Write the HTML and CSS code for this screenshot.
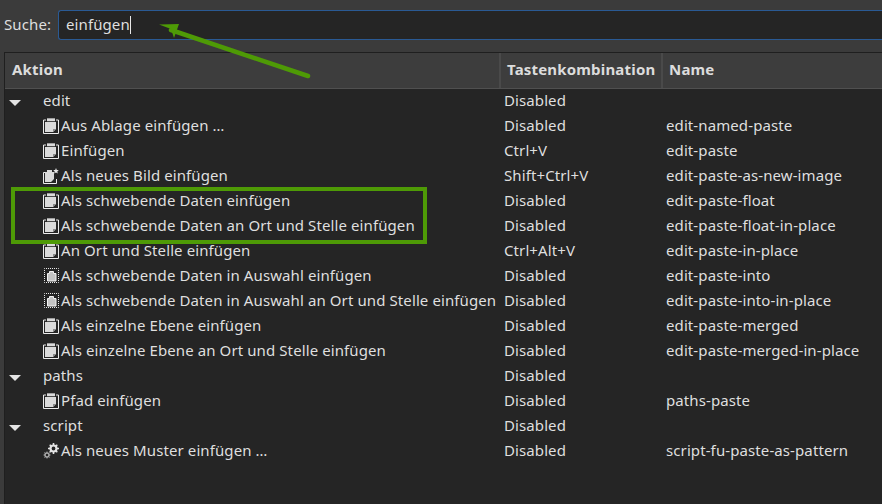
FILE: index.html
```html
<!DOCTYPE html>
<html lang="de">
<head>
<meta charset="utf-8">
<title>Tastenkombinationen</title>
<link rel="stylesheet" href="styles.css">
</head>
<body>
<svg class="defs" width="0" height="0" aria-hidden="true">
  <defs>
    <symbol id="paste" viewBox="0 0 16 16">
      <path d="M3 2H.5v13.500h15V2H13" fill="none" stroke="#ececec"/>
      <path d="M4 0h8v4h1v7l-3 3H2V4h2z" fill="#dadada"/>
      <path d="M4 0h8v1H4z" fill="#a0a0a0"/>
      <path d="M4 3h8v1H4z" fill="#4a4a4a"/>
      <path d="M10 14v-3h3z" fill="#8a8a8a"/>
    </symbol>
    <symbol id="paste-new" viewBox="0 0 16 16">
      <path d="M2.500 4.500H.5v11h13V11" fill="none" stroke="#ececec"/>
      <path d="M4 2h5v2h2v7l-3 3H2V4h2z" fill="#dadada"/>
      <path d="M13 0l.8 1.900 2 .2-1.500 1.300.5 2-1.800-1-1.800 1 .5-2-1.500-1.300 2-.2z" fill="#e8e8e8"/>
    </symbol>
    <symbol id="paste-into" viewBox="0 0 16 16">
      <rect x="1.500" y="0.500" width="14" height="14" fill="none" stroke="#e8e8e8" stroke-dasharray="1 1" stroke-dashoffset="0.500"/>
      <path d="M6.500 3.500h4v2h2.500v7.500H4.500V5.500h2z" fill="#c4c4c4" stroke="#f2f2f2"/>
    </symbol>
    <symbol id="gears" viewBox="0 0 16 16">
      <circle cx="10.500" cy="5.500" r="3" fill="none" stroke="#e4e4e4" stroke-width="2.200"/>
      <path d="M10.500 0v2M10.500 9v2M5 5.500h2M14 5.500h2M6.700 1.700l1.300 1.300M13 8l1.300 1.300M14.300 1.700L13 3M8 8L6.700 9.300" stroke="#e4e4e4" stroke-width="1.600"/>
      <circle cx="4" cy="12" r="2" fill="none" stroke="#a8a8a8" stroke-width="1.500"/>
      <path d="M4 8.500v1.500M4 14v1.500M.500 12H2M6 12h1.500M1.500 9.500l1 1M5.500 13.500l1 1M6.500 9.500l-1 1M2.500 13.500l-1 1" stroke="#a8a8a8"/>
    </symbol>
  </defs>
</svg>

<header class="search">
  <label class="search-label" for="q">Suche:</label>
  <div class="search-field" id="q"><span class="search-text">einfügen</span><span class="caret"></span></div>
</header>

<main class="table">
  <div class="thead">
    <div class="th th-action">Aktion</div>
    <div class="th th-key">Tastenkombination</div>
    <div class="th th-name">Name</div>
  </div>

  <div class="row"><div class="cell-action group"><span class="twisty"></span><span>edit</span></div><div>Disabled</div><div></div></div>
  <div class="row"><div class="cell-action"><svg class="ico"><use href="#paste"/></svg><span>Aus Ablage einfügen …</span></div><div>Disabled</div><div>edit-named-paste</div></div>
  <div class="row"><div class="cell-action"><svg class="ico"><use href="#paste"/></svg><span>Einfügen</span></div><div>Ctrl+V</div><div>edit-paste</div></div>
  <div class="row"><div class="cell-action"><svg class="ico"><use href="#paste-new"/></svg><span>Als neues Bild einfügen</span></div><div>Shift+Ctrl+V</div><div>edit-paste-as-new-image</div></div>
  <div class="row"><div class="cell-action"><svg class="ico"><use href="#paste"/></svg><span>Als schwebende Daten einfügen</span></div><div>Disabled</div><div>edit-paste-float</div></div>
  <div class="row"><div class="cell-action"><svg class="ico"><use href="#paste"/></svg><span>Als schwebende Daten an Ort und Stelle einfügen</span></div><div>Disabled</div><div>edit-paste-float-in-place</div></div>
  <div class="row"><div class="cell-action"><svg class="ico"><use href="#paste"/></svg><span>An Ort und Stelle einfügen</span></div><div>Ctrl+Alt+V</div><div>edit-paste-in-place</div></div>
  <div class="row"><div class="cell-action"><svg class="ico"><use href="#paste-into"/></svg><span>Als schwebende Daten in Auswahl einfügen</span></div><div>Disabled</div><div>edit-paste-into</div></div>
  <div class="row"><div class="cell-action"><svg class="ico"><use href="#paste-into"/></svg><span>Als schwebende Daten in Auswahl an Ort und Stelle einfügen</span></div><div>Disabled</div><div>edit-paste-into-in-place</div></div>
  <div class="row"><div class="cell-action"><svg class="ico"><use href="#paste"/></svg><span>Als einzelne Ebene einfügen</span></div><div>Disabled</div><div>edit-paste-merged</div></div>
  <div class="row"><div class="cell-action"><svg class="ico"><use href="#paste"/></svg><span>Als einzelne Ebene an Ort und Stelle einfügen</span></div><div>Disabled</div><div>edit-paste-merged-in-place</div></div>
  <div class="row"><div class="cell-action group"><span class="twisty"></span><span>paths</span></div><div>Disabled</div><div></div></div>
  <div class="row"><div class="cell-action"><svg class="ico"><use href="#paste"/></svg><span>Pfad einfügen</span></div><div>Disabled</div><div>paths-paste</div></div>
  <div class="row"><div class="cell-action group"><span class="twisty"></span><span>script</span></div><div>Disabled</div><div></div></div>
  <div class="row"><div class="cell-action"><svg class="ico"><use href="#gears"/></svg><span>Als neues Muster einfügen …</span></div><div>Disabled</div><div>script-fu-paste-as-pattern</div></div>
</main>

<div class="highlight"></div>
<svg class="arrow" width="160" height="60" viewBox="0 0 160 60" aria-hidden="true">
  <path d="M149 54L12 8" stroke="#4e9a06" stroke-width="4.500" stroke-linecap="round" fill="none"/>
  <path d="M0 2.500L20 2 15 16 12 7z" fill="#4e9a06"/>
</svg>
</body>
</html>
```
FILE: styles.css
```css
* { box-sizing: border-box; }
html, body { margin: 0; height: 100%; }
body {
  width: 882px;
  height: 504px;
  overflow: hidden;
  position: relative;
  background: #3b3b3b;
  color: #dfdfdf;
  font-family: "Noto Sans", "Open Sans", sans-serif;
  font-size: 15px;
  letter-spacing: 0.1px;
  display: flex;
  flex-direction: column;
}
.defs { position: absolute; }
.search {
  display: flex;
  align-items: center;
  height: 52px;
  padding: 10px 0 12px 4px;
  flex: none;
}
.search-label { width: 54px; flex: none; padding-bottom: 2px; }
.search-field {
  flex: 1;
  height: 30px;
  background: #252525;
  border: 1px solid #2a5a94;
  border-right: 0;
  border-radius: 3px 0 0 3px;
  padding-left: 7px;
  display: flex;
  align-items: center;
}
.search-text { padding-bottom: 2px; }
.caret { width: 1px; height: 18px; background: #e8e8e8; }
.table {
  flex: 1;
  margin-left: 4px;
  background: #252525;
  border-top: 1px solid #1f1f1f;
  border-left: 1px solid #1f1f1f;
}
.thead {
  display: grid;
  grid-template-columns: 496px 162px 1fr;
  height: 36px;
  background: #3d3d3d;
  border-bottom: 1px solid #505050;
  font-weight: 700;
  letter-spacing: 0.18px;
  color: #dcdcdc;
}
.th { display: flex; align-items: center; padding: 0 0 4px 6px; border-right: 2px solid #4a4a4a; }
.th-action { padding-left: 7px; }
.th-name { border-right: 0; }
.row {
  display: grid;
  grid-template-columns: 496px 162px 1fr;
  height: 25px;
  padding-bottom: 3px;
  line-height: 22px;
  white-space: nowrap;
}
.row > div:nth-child(2), .row > div:nth-child(3) { padding-left: 3px; }
.cell-action { display: flex; align-items: center; height: 22px; padding-left: 38px; }
.group { padding-left: 4px; }
.ico { width: 16px; height: 16px; margin: 2px 2px 0 0; flex: none; }
.twisty {
  width: 0; height: 0; flex: none;
  margin: 6px 22px 0 0;
  border-left: 6px solid transparent;
  border-right: 6px solid transparent;
  border-top: 6px solid #e4e4e4;
}
.highlight {
  position: absolute;
  left: 11px; top: 187px;
  width: 416px; height: 57px;
  border: 4px solid #4e9a06;
}
.arrow { position: absolute; left: 159px; top: 22px; }
```
